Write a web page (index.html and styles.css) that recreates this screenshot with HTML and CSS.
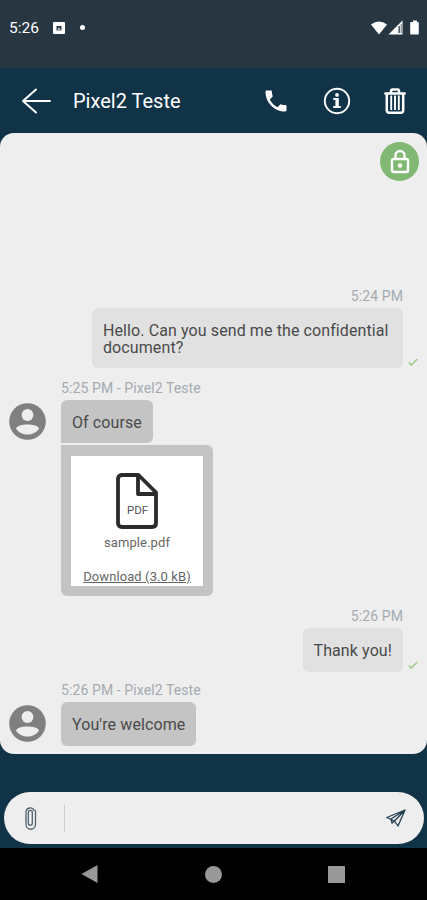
FILE: index.html
```
<!DOCTYPE html>
<html lang="en">
<head>
    <meta charset="UTF-8">
    <meta name="viewport" content="width=device-width, initial-scale=1.0">
    <title>Pixel2 Teste</title>
    <link rel="stylesheet" href="styles.css">
</head>
<body>
    <div class="phone">
        <div class="statusbar">
            <span class="time">5:26</span>
            <svg class="app-icon" width="12" height="12" viewBox="0 0 12 12"><path fill="#fff" fill-rule="evenodd" d="M1 0h10a1 1 0 0 1 1 1v10a1 1 0 0 1-1 1H1a1 1 0 0 1-1-1V1a1 1 0 0 1 1-1zM3.500 8.500h5V4h-5z"/><path fill="#b8bec3" d="M4 8.500 6 5l2 3.500z"/></svg>
            <span class="dot"></span>
            <svg class="signals" width="50" height="16" viewBox="0 0 50 16">
                <path fill="#fff" d="M1 4.500Q9 -1.500 17 4.500L9 14.500z"/>
                <path fill="#fff" d="M18.500 14.500 32.500 .500V14.500z"/>
                <path fill="#283642" d="M28.500 6h1.300v7h-1.300zM30.800 4h.7v9h-.7z"/>
                <path fill="#fff" d="M41 2h2V.500h4V2h1q.8 0 .8.800v11q0 .8-.8.800h-7q-.8 0-.8-.8v-11q0-.8.8-.8z"/>
            </svg>
        </div>

        <div class="header">
            <svg class="back" width="30" height="26" viewBox="0 0 30 26"><path d="M29 13H2M15 1.500 2 13l13 11.500" fill="none" stroke="#fff" stroke-width="2" stroke-linecap="round" stroke-linejoin="round"/></svg>
            <div class="title">Pixel2 Teste</div>
            <svg class="call" width="28" height="28" viewBox="0 0 24 24"><path fill="#fff" d="M6.620 10.790c1.440 2.830 3.760 5.140 6.590 6.590l2.200-2.200c.27-.27.67-.36 1.020-.24 1.120.37 2.330.57 3.570.57.55 0 1 .45 1 1V20c0 .55-.45 1-1 1-9.390 0-17-7.610-17-17 0-.55.45-1 1-1h3.500c.55 0 1 .45 1 1 0 1.250.2 2.450.57 3.570.11.35.03.74-.25 1.020l-2.200 2.200z"/></svg>
            <svg class="info" width="28" height="28" viewBox="0 0 28 28">
                <circle cx="14" cy="14" r="12.200" fill="none" stroke="#fff" stroke-width="1.900"/>
                <path fill="#fff" d="M10.300 11h5.500v8h2v2h-7.600v-2h2.200v-6h-2.100z"/>
                <circle cx="14" cy="7.900" r="1.900" fill="#fff"/>
            </svg>
            <svg class="trash" width="24" height="28" viewBox="0 0 24 28">
                <path d="M2.300 6.500h19.400M8 5.500V3.900Q8 2.500 9.500 2.500h5Q16 2.500 16 3.900v1.600M3.800 7v16.300q0 2.500 2.500 2.500h11.400q2.500 0 2.500-2.500V7" fill="none" stroke="#fff" stroke-width="2.500" stroke-linecap="round"/>
                <path d="M8.200 8.500v14.500M12 8.500v14.500M15.800 8.500v14.500" stroke="#fff" stroke-width="1.900"/>
            </svg>
        </div>

        <div class="chat">
            <div class="lock">
                <svg width="20" height="26" viewBox="0 0 20 26">
                    <rect x="2" y="10" width="16" height="13" rx="1.500" fill="none" stroke="#fff" stroke-width="2.400"/>
                    <path d="M5.500 10V6.500a4.500 4.500 0 0 1 9 0V10" fill="none" stroke="#fff" stroke-width="2.400"/>
                    <circle cx="10" cy="16.500" r="2.200" fill="#fff"/>
                </svg>
            </div>

            <div class="meta meta-right">5:24 PM</div>
            <div class="row sent">
                <div class="bubble long">Hello. Can you send me the confidential document?</div>
                <svg class="check" width="10" height="8" viewBox="0 0 10 8"><path d="M.700 4.500 3.300 7 9.300 1" fill="none" stroke="#9ccc88" stroke-width="1.500"/></svg>
            </div>

            <div class="meta">5:25 PM - Pixel2 Teste</div>
            <div class="row received">
                <svg class="avatar" width="38" height="38" viewBox="0 0 38 38">
                    <circle cx="19.500" cy="18.500" r="18.300" fill="#808080"/>
                    <circle cx="19.500" cy="12" r="5.900" fill="#eee"/>
                    <path fill="#eee" d="M8 25.500C9.500 20 29.500 20 31 25.500 26 33.500 13 33.500 8 25.500z"/>
                </svg>
                <div class="bubble first">Of course</div>
            </div>
            <div class="attachment">
                <div class="file">
                    <svg class="file-icon" width="44" height="56" viewBox="0 0 44 56">
                        <path d="M6 2H23.500L41 19.500V50q0 4-4 4H7q-4 0-4-4V6q0-4 4-4zM23 2.500V21h18" fill="none" stroke="#2b2b2b" stroke-width="3.800" stroke-linejoin="round"/>
                        <text class="file-type" x="22.500" y="41" text-anchor="middle">PDF</text>
                    </svg>
                    <div class="file-name">sample.pdf</div>
                    <div class="download">Download (3.0 kB)</div>
                </div>
            </div>

            <div class="meta meta-right">5:26 PM</div>
            <div class="row sent short">
                <div class="bubble">Thank you!</div>
                <svg class="check" width="10" height="8" viewBox="0 0 10 8"><path d="M.700 4.500 3.300 7 9.300 1" fill="none" stroke="#9ccc88" stroke-width="1.500"/></svg>
            </div>

            <div class="meta">5:26 PM - Pixel2 Teste</div>
            <div class="row received">
                <svg class="avatar" width="38" height="38" viewBox="0 0 38 38">
                    <circle cx="19.500" cy="18.500" r="18.300" fill="#808080"/>
                    <circle cx="19.500" cy="12" r="5.900" fill="#eee"/>
                    <path fill="#eee" d="M8 25.500C9.500 20 29.500 20 31 25.500 26 33.500 13 33.500 8 25.500z"/>
                </svg>
                <div class="bubble">You're welcome</div>
            </div>
        </div>

        <div class="composer">
            <svg class="clip" width="14" height="24" viewBox="0 0 14 24"><path d="M9.300 6.500V17a2 2.200 0 0 1-4 0V6.500a2 2.200 0 0 1 4 0M12.500 4.500V18.500a4.500 4.500 0 0 1-9.500 0V5.500a4.200 4.200 0 0 1 8-1" fill="none" stroke="#50636f" stroke-width="1.300" stroke-linecap="round"/></svg>
            <div class="divider"></div>
            <svg class="send" width="22" height="20" viewBox="0 0 22 20"><path d="M1.800 9.500 20 2 13 18 9.500 13zM20 2 9.500 13M20 2 6 11l1 4 2.500-2" fill="none" stroke="#233f50" stroke-width="1.300" stroke-linejoin="round"/></svg>
        </div>

        <div class="navbar">
            <svg width="18" height="20" viewBox="0 0 18 20"><path fill="#999" d="M16.500 1v18L.500 10z"/></svg>
            <div class="home"></div>
            <div class="recent"></div>
        </div>
    </div>
</body>
</html>
```

FILE: styles.css
```
* {
    box-sizing: border-box;
}
body {
    margin: 0;
    font-family: Roboto, "Liberation Sans", sans-serif;
    background-color: #103347;
}
svg {
    display: block;
    flex: none;
}
.phone {
    display: flex;
    flex-direction: column;
    width: 427px;
    height: 900px;
    overflow: hidden;
}
.statusbar {
    display: flex;
    align-items: center;
    height: 68px;
    padding: 0 7px 13px 9px;
    background-color: #283642;
    color: #fff;
}
.time {
    width: 44px;
    font-size: 15.5px;
}
.dot {
    width: 5px;
    height: 5px;
    margin-left: 15px;
    border-radius: 50%;
    background-color: #fff;
}
.signals {
    margin-left: auto;
}
.header {
    display: flex;
    align-items: center;
    height: 65px;
    padding: 0 20px 0 21px;
}
.title {
    flex: 1;
    padding-left: 22px;
    color: #fff;
    font-size: 20px;
}
.info {
    margin-left: 33px;
}
.trash {
    margin-left: 32px;
}
.chat {
    position: relative;
    height: 621px;
    padding: 151px 8px 8px;
    border-radius: 14px;
    background-color: #eee;
}
.lock {
    position: absolute;
    top: 9px;
    right: 8px;
    display: flex;
    align-items: center;
    justify-content: center;
    width: 39px;
    height: 39px;
    border-radius: 50%;
    background-color: #81b873;
}
.meta {
    height: 24px;
    padding-left: 53px;
    color: #a4abb0;
    font-size: 14px;
    letter-spacing: 0.1px;
    line-height: 24px;
}
.meta-right {
    padding-right: 16px;
    text-align: right;
}
.row {
    display: flex;
}
.bubble {
    padding: 14px 11px 12px;
    border-radius: 6px;
    color: #4a4a4a;
    font-size: 16px;
    letter-spacing: 0.1px;
    line-height: 18px;
}
.sent {
    justify-content: flex-end;
    align-items: flex-end;
    margin-bottom: 8px;
}
.sent .bubble {
    background-color: #e1e1e1;
}
.sent .long {
    width: 311px;
    line-height: 17px;
}
.short {
    margin-bottom: 6px;
}
.check {
    margin: 0 1px 2px 5px;
}
.short .check {
    margin-bottom: 3px;
}
.received {
    align-items: center;
}
.received .bubble {
    margin-left: 15px;
    background-color: #c4c4c4;
}
.received .first {
    height: 43px;
    border-bottom-left-radius: 0;
}
.attachment {
    width: 152px;
    height: 151px;
    margin: 2px 0 8px 53px;
    padding: 11px 10px 10px;
    border-radius: 0 6px 6px 6px;
    background-color: #c4c4c4;
}
.file {
    display: flex;
    flex-direction: column;
    align-items: center;
    height: 130px;
    padding-top: 17px;
    background-color: #fff;
    color: #666;
    font-size: 13px;
    letter-spacing: 0.1px;
    line-height: 16px;
}
.file-type {
    fill: #555;
    font-size: 11.5px;
    letter-spacing: 0;
}
.file-name {
    margin: 6px 0 18px;
}
.download {
    text-decoration: underline;
}
.composer {
    display: flex;
    align-items: center;
    height: 52px;
    margin: 38px 3px 4px 4px;
    padding: 0 17px 0 19px;
    border-radius: 26px;
    background-color: #eee;
}
.divider {
    width: 1px;
    height: 27px;
    margin-left: 27px;
    background-color: #cbcfd2;
}
.send {
    margin-left: auto;
}
.navbar {
    display: flex;
    align-items: center;
    flex: 1;
    padding-left: 81px;
    background-color: #000;
}
.home {
    width: 17px;
    height: 17px;
    margin-left: 106px;
    border-radius: 50%;
    background-color: #999;
}
.recent {
    width: 17px;
    height: 17px;
    margin-left: 106px;
    background-color: #999;
}
```
